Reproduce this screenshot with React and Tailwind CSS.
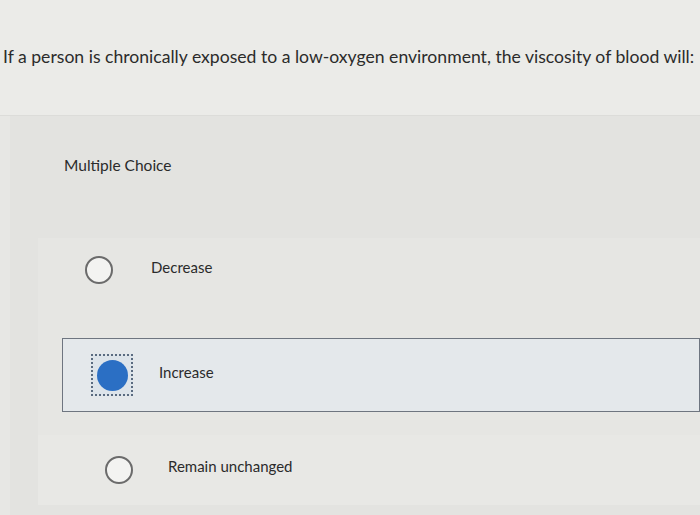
import React from "react";

function Radio({ checked }) {
  if (checked) {
    return (
      <div className="w-[42px] h-[42px] border-2 border-dotted border-[#5a6b80] flex items-center justify-center bg-[#dde4ea]">
        <div className="w-[31px] h-[31px] rounded-full bg-[#2b6fc4]" />
      </div>
    );
  }
  return <div className="w-[28px] h-[28px] rounded-full border-2 border-[#6b6b6b] bg-[#f3f3f1]" />;
}

export default function App() {
  return (
    <div className="w-[700px] h-[515px] overflow-hidden bg-[#e7e7e4] text-[#2b2b2b] font-['Lato','Liberation_Sans',sans-serif] flex flex-col">
      {/* question */}
      <div className="h-[116px] bg-[#ebebe8] pl-[3px] pt-[44px] border-b border-[#dcdcd9]">
        <p className="text-[17.6px] whitespace-nowrap">
          If a person is chronically exposed to a low-oxygen environment, the viscosity of blood will:
        </p>
      </div>

      {/* answer panel */}
      <div className="flex-1 ml-[10px] bg-[#e3e3e0] flex flex-col">
        <div className="pl-[54px] pt-[38px] pb-[10px] text-[15.5px] leading-[22px]">Multiple Choice</div>
        <div className="mt-[52px] ml-[28px] bg-[#e6e6e3] flex flex-col">
          <div className="flex items-center h-[64px] pl-[47px] gap-[38px]">
            <Radio />
            <span className="text-[15px] -mt-[6px]">Decrease</span>
          </div>
          <div className="flex items-center h-[74px] ml-[24px] mt-[36px] border-[1.5px] border-[#6e7580] bg-[#e4e8eb] pl-[28px] gap-[26px]">
            <Radio checked />
            <span className="text-[15px] -mt-[6px]">Increase</span>
          </div>
          <div className="flex items-center h-[70px] pl-[67px] mt-[23px] gap-[35px] bg-[#e8e8e5]">
            <Radio />
            <span className="text-[15px] -mt-[8px]">Remain unchanged</span>
          </div>
        </div>
      </div>
    </div>
  );
}
